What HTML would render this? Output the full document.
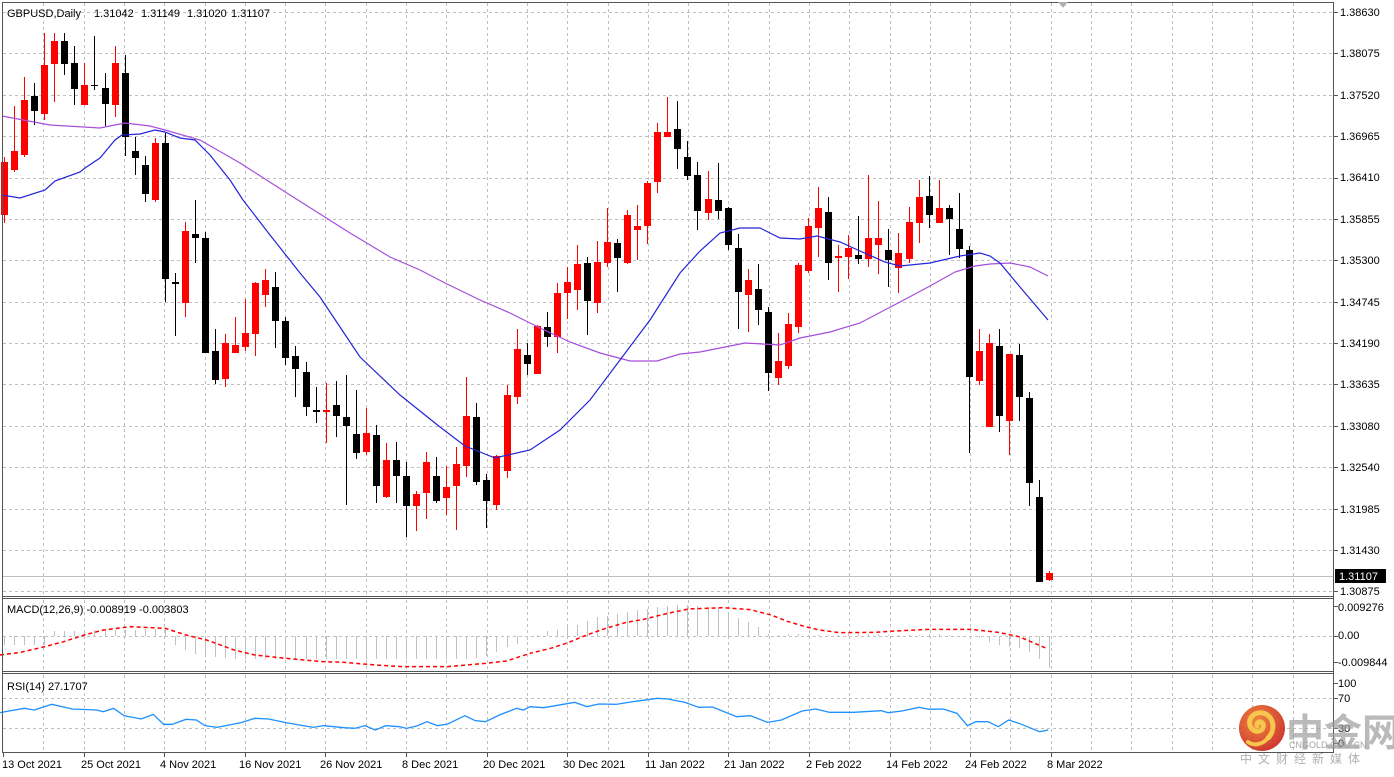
<!DOCTYPE html>
<html><head><meta charset="utf-8">
<style>
html,body{margin:0;padding:0;background:#fff;}
body{width:1394px;height:777px;overflow:hidden;position:relative;font-family:"Liberation Sans",sans-serif;}
svg{position:absolute;left:0;top:0;}
text{font-family:"Liberation Sans","Noto Sans CJK SC",sans-serif;font-size:11px;fill:#000;}
</style></head>
<body>
<svg id="s" width="1394" height="777" viewBox="0 0 1394 777" xmlns="http://www.w3.org/2000/svg" shape-rendering="crispEdges">
<g id="grid"></g>
<g id="ind"></g>
<g id="candles"></g>
<g id="lines" shape-rendering="auto"></g>
<g id="frame"></g>
<text x="7" y="17">GBPUSD,Daily</text>
<text x="94" y="17">1.31042</text>
<text x="141" y="17">1.31149</text>
<text x="187" y="17">1.31020</text>
<text x="231" y="17">1.31107</text>
<text x="7" y="613">MACD(12,26,9) -0.008919 -0.003803</text>
<text x="7" y="690">RSI(14) 27.1707</text>
<g id="plabels">
<text x="1340" y="16">1.38630</text>
<text x="1340" y="57">1.38075</text>
<text x="1340" y="99">1.37520</text>
<text x="1340" y="140">1.36965</text>
<text x="1340" y="181">1.36410</text>
<text x="1340" y="223">1.35855</text>
<text x="1340" y="264">1.35300</text>
<text x="1340" y="306">1.34745</text>
<text x="1340" y="347">1.34190</text>
<text x="1340" y="388">1.33635</text>
<text x="1340" y="430">1.33080</text>
<text x="1340" y="471">1.32540</text>
<text x="1340" y="513">1.31985</text>
<text x="1340" y="554">1.31430</text>
<text x="1340" y="595">1.30875</text>
<text x="1338" y="611">0.009276</text>
<text x="1338" y="639">0.00</text>
<text x="1338" y="666">-0.009844</text>
<text x="1338" y="687">100</text>
<text x="1338" y="702">70</text>
<text x="1338" y="732">30</text>
<text x="1338" y="747">0</text>
</g>
<rect x="1335" y="569" width="51" height="14" fill="#000"/>
<text x="1339" y="580" style="fill:#fff">1.31107</text>
<g id="dates">
<text x="2" y="768">13 Oct 2021</text>
<text x="81" y="768">25 Oct 2021</text>
<text x="160" y="768">4 Nov 2021</text>
<text x="239" y="768">16 Nov 2021</text>
<text x="320" y="768">26 Nov 2021</text>
<text x="402" y="768">8 Dec 2021</text>
<text x="483" y="768">20 Dec 2021</text>
<text x="563" y="768">30 Dec 2021</text>
<text x="645" y="768">11 Jan 2022</text>
<text x="724" y="768">21 Jan 2022</text>
<text x="806" y="768">2 Feb 2022</text>
<text x="886" y="768">14 Feb 2022</text>
<text x="965" y="768">24 Feb 2022</text>
<text x="1047" y="768">8 Mar 2022</text>
</g>
<polygon points="1058,2 1068,2 1063,8" fill="#b0b0b0"/>
<g shape-rendering="auto" opacity="0.9">
<defs><radialGradient id="lg" cx="40%" cy="35%" r="70%"><stop offset="0" stop-color="#f07a2a"/><stop offset="1" stop-color="#c8201a"/></radialGradient></defs>
<circle cx="1262" cy="728" r="23" fill="url(#lg)"/>
<path d="M1268 738 C1276 730 1274 716 1263 713 C1252 711 1246 722 1252 729 C1257 734 1265 730 1263 724 C1261 720 1256 722 1257 726" fill="none" stroke="#f6c23a" stroke-width="5" stroke-linecap="round"/>
<path d="M1268 738 C1262 745 1254 746 1248 742" fill="none" stroke="#f6c23a" stroke-width="4" stroke-linecap="round"/>
<text x="1286" y="746" style="font-size:38px;font-weight:bold;fill:#9a9a9a;opacity:0.75">中金网</text>
<text x="1289" y="748" style="font-size:9px;fill:#9a9a9a">CNGOLD.COM.CN</text>
<text x="1240" y="763" style="font-size:12px;fill:#a8a8a8;letter-spacing:6px">中文财经新媒体</text>
</g>
</svg>
<script>
var NS="http://www.w3.org/2000/svg";
function el(p,t,a){var e=document.createElementNS(NS,t);for(var k in a)e.setAttribute(k,a[k]);p.appendChild(e);return e;}
var G=document.getElementById('grid'),I=document.getElementById('ind'),C=document.getElementById('candles'),L=document.getElementById('lines'),F=document.getElementById('frame');
var gs={stroke:'#c0c0c0','stroke-width':1,'stroke-dasharray':'3,3'};
for(var k=1;k<=32;k++){var x=Math.round(3+40.3*k)+0.5;
 [[3,597],[600,672],[675,752]].forEach(function(r){var a=Object.assign({x1:x,x2:x,y1:r[0],y2:r[1]},gs);el(G,'line',a);});}
for(var k=0;k<15;k++){var y=Math.round(12+41.375*k)+0.5;el(G,'line',Object.assign({x1:3,x2:1333,y1:y,y2:y},gs));}
[636.5,698.5,728.5].forEach(function(y){el(G,'line',Object.assign({x1:3,x2:1333,y1:y,y2:y},gs));});
el(G,'line',{x1:3,x2:1333,y1:576.5,y2:576.5,stroke:'#c0c0c0','stroke-width':1});
var D=[[162,215,157,223,1],[151,170,106,172,1],[100,155,77,157,1],[96,111,83,125,0],[65,114,33,120,1],[41,64,33,102,1],[41,64,33,75,0],[63,89,46,105,0],[85,105,63,105,1],[85,86,36,90,0],[88,104,73,126,0],[63,105,46,117,1],[73,137,55,156,0],[151,158,137,175,0],[165,194,156,202,0],[143,200,138,202,1],[143,279,133,302,0],[282,284,273,336,0],[231,303,222,317,1],[234,238,200,263,0],[238,353,232,353,0],[351,380,329,384,0],[343,379,334,387,1],[345,353,317,353,1],[333,347,299,351,1],[283,334,282,356,1],[280,295,269,307,1],[287,321,272,348,0],[321,358,317,365,0],[356,369,346,397,0],[372,407,362,416,0],[410,412,387,423,0],[410,412,383,443,1],[405,416,381,437,0],[417,426,375,505,0],[434,453,390,459,0],[433,452,408,455,1],[435,486,425,503,0],[460,497,443,498,1],[460,476,442,503,0],[476,506,462,537,0],[494,506,491,531,1],[462,493,452,519,1],[476,501,457,503,0],[487,498,466,515,1],[464,486,447,530,1],[416,466,377,477,1],[417,482,403,485,0],[480,501,474,528,0],[456,505,455,510,1],[395,471,385,478,1],[349,397,329,404,1],[355,364,343,375,0],[326,374,325,374,1],[327,337,312,347,0],[293,337,283,353,1],[282,293,267,319,1],[264,290,245,310,1],[263,301,257,335,0],[262,303,241,313,1],[242,263,208,267,1],[243,258,239,292,0],[215,263,210,264,1],[226,230,205,260,1],[183,226,181,244,1],[132,182,123,193,1],[132,137,97,137,1],[129,149,101,169,0],[157,176,141,180,0],[175,211,162,230,0],[199,213,171,220,1],[200,211,163,219,0],[208,245,207,250,0],[248,292,234,329,0],[280,295,269,332,1],[289,310,264,325,0],[312,373,307,391,0],[361,378,333,385,1],[324,366,313,369,1],[265,327,263,333,1],[226,271,218,273,1],[208,228,187,257,1],[212,263,197,280,0],[256,258,245,292,1],[248,257,235,279,1],[255,259,216,264,0],[238,259,175,267,1],[238,245,201,274,1],[250,260,229,287,0],[253,268,233,293,1],[222,259,207,263,1],[197,223,180,243,1],[196,215,176,228,0],[208,223,180,223,1],[208,219,205,255,0],[229,249,193,258,0],[250,377,246,453,0],[351,381,329,385,1],[343,427,334,427,1],[346,416,329,432,0],[354,421,354,455,1],[355,397,344,421,0],[398,483,392,506,0],[497,582,480,582,0],[573,580,571,581,1]];
var XS=[];
D.forEach(function(d,i){var x=Math.round(4+i*10.05);XS.push(x);var c=d[4]?'#ff0000':'#000000';
 el(C,'rect',{x:x,y:d[2],width:1,height:Math.max(1,d[3]-d[2]),fill:c});
 el(C,'rect',{x:x-3,y:d[0],width:7,height:Math.max(1,d[1]-d[0]),fill:c});});
function pl(pts,a){a.points=pts.map(function(p){return p[0]+','+p[1];}).join(' ');a.fill='none';return el(L,'polyline',a);}
var violet=[[2,116],[50,125],[100,128],[125,123],[150,126],[165,130],[200,140],[240,163],[290,195],[350,233],[390,257],[420,270],[445,283],[480,300],[510,313],[540,328],[570,342],[600,353],[630,361],[657,361],[680,354],[700,352],[745,343],[780,345],[800,338],[830,332],[860,323],[900,302],[930,286],[955,272],[975,266],[990,264],[1010,263],[1030,267],[1048,276]];
var blue=[[2,195],[20,198],[45,190],[55,181],[80,172],[85,168],[100,158],[115,140],[122,135],[140,134],[155,130],[165,132],[180,138],[195,140],[210,155],[230,180],[243,200],[270,235],[300,273],[320,297],[340,327],[350,342],[360,357],[400,395],[440,427],[465,446],[495,458],[530,450],[560,430],[590,400],[620,360],[650,320],[680,273],[700,251],[720,233],[740,228],[760,228],[780,238],[800,239],[817,236],[840,242],[860,251],[885,262],[900,266],[930,263],[960,256],[980,253],[990,256],[1000,263],[1020,287],[1048,320]];
pl(violet,{stroke:'#a64ddb','stroke-width':1.2});
pl(blue,{stroke:'#2424d8','stroke-width':1.2});
var H=[[4,645],[45,645],[52,631],[165,629],[172,644],[200,656],[240,659],[470,659],[490,655],[510,646],[528,640],[545,631],[556,630],[576,625],[597,617],[618,614],[638,610],[659,607],[678,605],[699,606],[718,608],[726,612],[747,622],[757,626],[771,636],[790,634],[820,635],[860,634],[900,635],[940,634],[978,638],[998,645],[1019,648],[1029,652],[1040,660],[1048,668]];
function interp(A,x){for(var i=0;i<A.length-1;i++){if(x>=A[i][0]&&x<=A[i+1][0]){var t=(x-A[i][0])/(A[i+1][0]-A[i][0]);return A[i][1]+t*(A[i+1][1]-A[i][1]);}}return x<A[0][0]?A[0][1]:A[A.length-1][1];}
XS.forEach(function(x){var y=Math.round(interp(H,x));var y0=636;el(I,'rect',{x:x,y:Math.min(y,y0),width:1,height:Math.max(1,Math.abs(y-y0)),fill:'#c0c0c0'});});
function conv(raw,x0,sx){return raw.map(function(p){return [x0+p[0]/sx,585+p[1]/3];});}
var sig=conv([[0,210],[60,202],[130,185],[185,170],[245,150],[300,135],[380,125],[480,130],[540,150],[600,165],[680,195],[740,210],[830,220],[940,230],[1000,232],[1090,240],[1170,245],[1300,245],[1410,235],[1470,228],[1540,205]],0,2.904).concat(conv([[0,205],[60,190],[105,175],[160,152],[220,130],[280,112],[330,103],[400,85],[460,72],[560,68],[640,74],[700,90],[750,110],[800,125],[840,135],[900,143],[1000,142],[1060,138],[1160,133],[1280,133],[1360,142],[1420,155],[1500,190]],530,2.904));
pl(sig,{stroke:'#ff0000','stroke-width':1.5,'stroke-dasharray':'4,3'});
var rsi=conv([[0,383],[70,370],[100,375],[150,358],[210,372],[280,375],[300,380],[330,370],[360,392],[410,402],[445,388],[475,418],[500,418],[540,403],[570,405],[595,422],[630,427],[700,413],[740,400],[780,402],[830,413],[880,422],[910,427],[940,422],[1000,428],[1030,430],[1060,422],[1090,435],[1120,422],[1160,425],[1180,430],[1210,423],[1240,410],[1270,422],[1300,417],[1350,392],[1380,407],[1410,410],[1450,390],[1500,370],[1520,375]],0,2.904).concat(conv([[0,365],[40,368],[130,352],[165,365],[200,357],[250,358],[300,350],[370,340],[400,342],[450,352],[490,367],[530,366],[600,395],[640,392],[690,412],[730,405],[790,378],[830,372],[870,382],[940,382],[1020,377],[1040,383],[1080,378],[1130,367],[1160,373],[1200,372],[1240,385],[1270,422],[1295,410],[1330,410],[1360,425],[1390,405],[1420,415],[1480,440],[1505,435]],530,2.904));
pl(rsi,{stroke:'#1e90ff','stroke-width':1.3});
el(F,'rect',{x:2,y:2,width:1,height:750,fill:'#555'});
el(F,'rect',{x:2,y:2,width:1332,height:1,fill:'#555'});
el(F,'rect',{x:1333,y:2,width:1,height:751,fill:'#555'});
el(F,'rect',{x:2,y:596,width:1332,height:1,fill:'#555'});
el(F,'rect',{x:2,y:598,width:1332,height:1,fill:'#555'});
el(F,'rect',{x:2,y:671,width:1332,height:1,fill:'#555'});
el(F,'rect',{x:2,y:673,width:1332,height:1,fill:'#555'});
el(F,'rect',{x:2,y:752,width:1332,height:1,fill:'#555'});
for(var k=0;k<15;k++){var y=Math.round(12+41.375*k);el(F,'rect',{x:1334,y:y,width:4,height:1,fill:'#555'});}
[606,636,662,683,698,728,743].forEach(function(y){el(F,'rect',{x:1334,y:y,width:4,height:1,fill:'#555'});});
for(var k=0;k<=13;k++){var x=Math.round(3+80.6*k);el(F,'rect',{x:x,y:753,width:1,height:4,fill:'#555'});}
</script>
</body></html>
